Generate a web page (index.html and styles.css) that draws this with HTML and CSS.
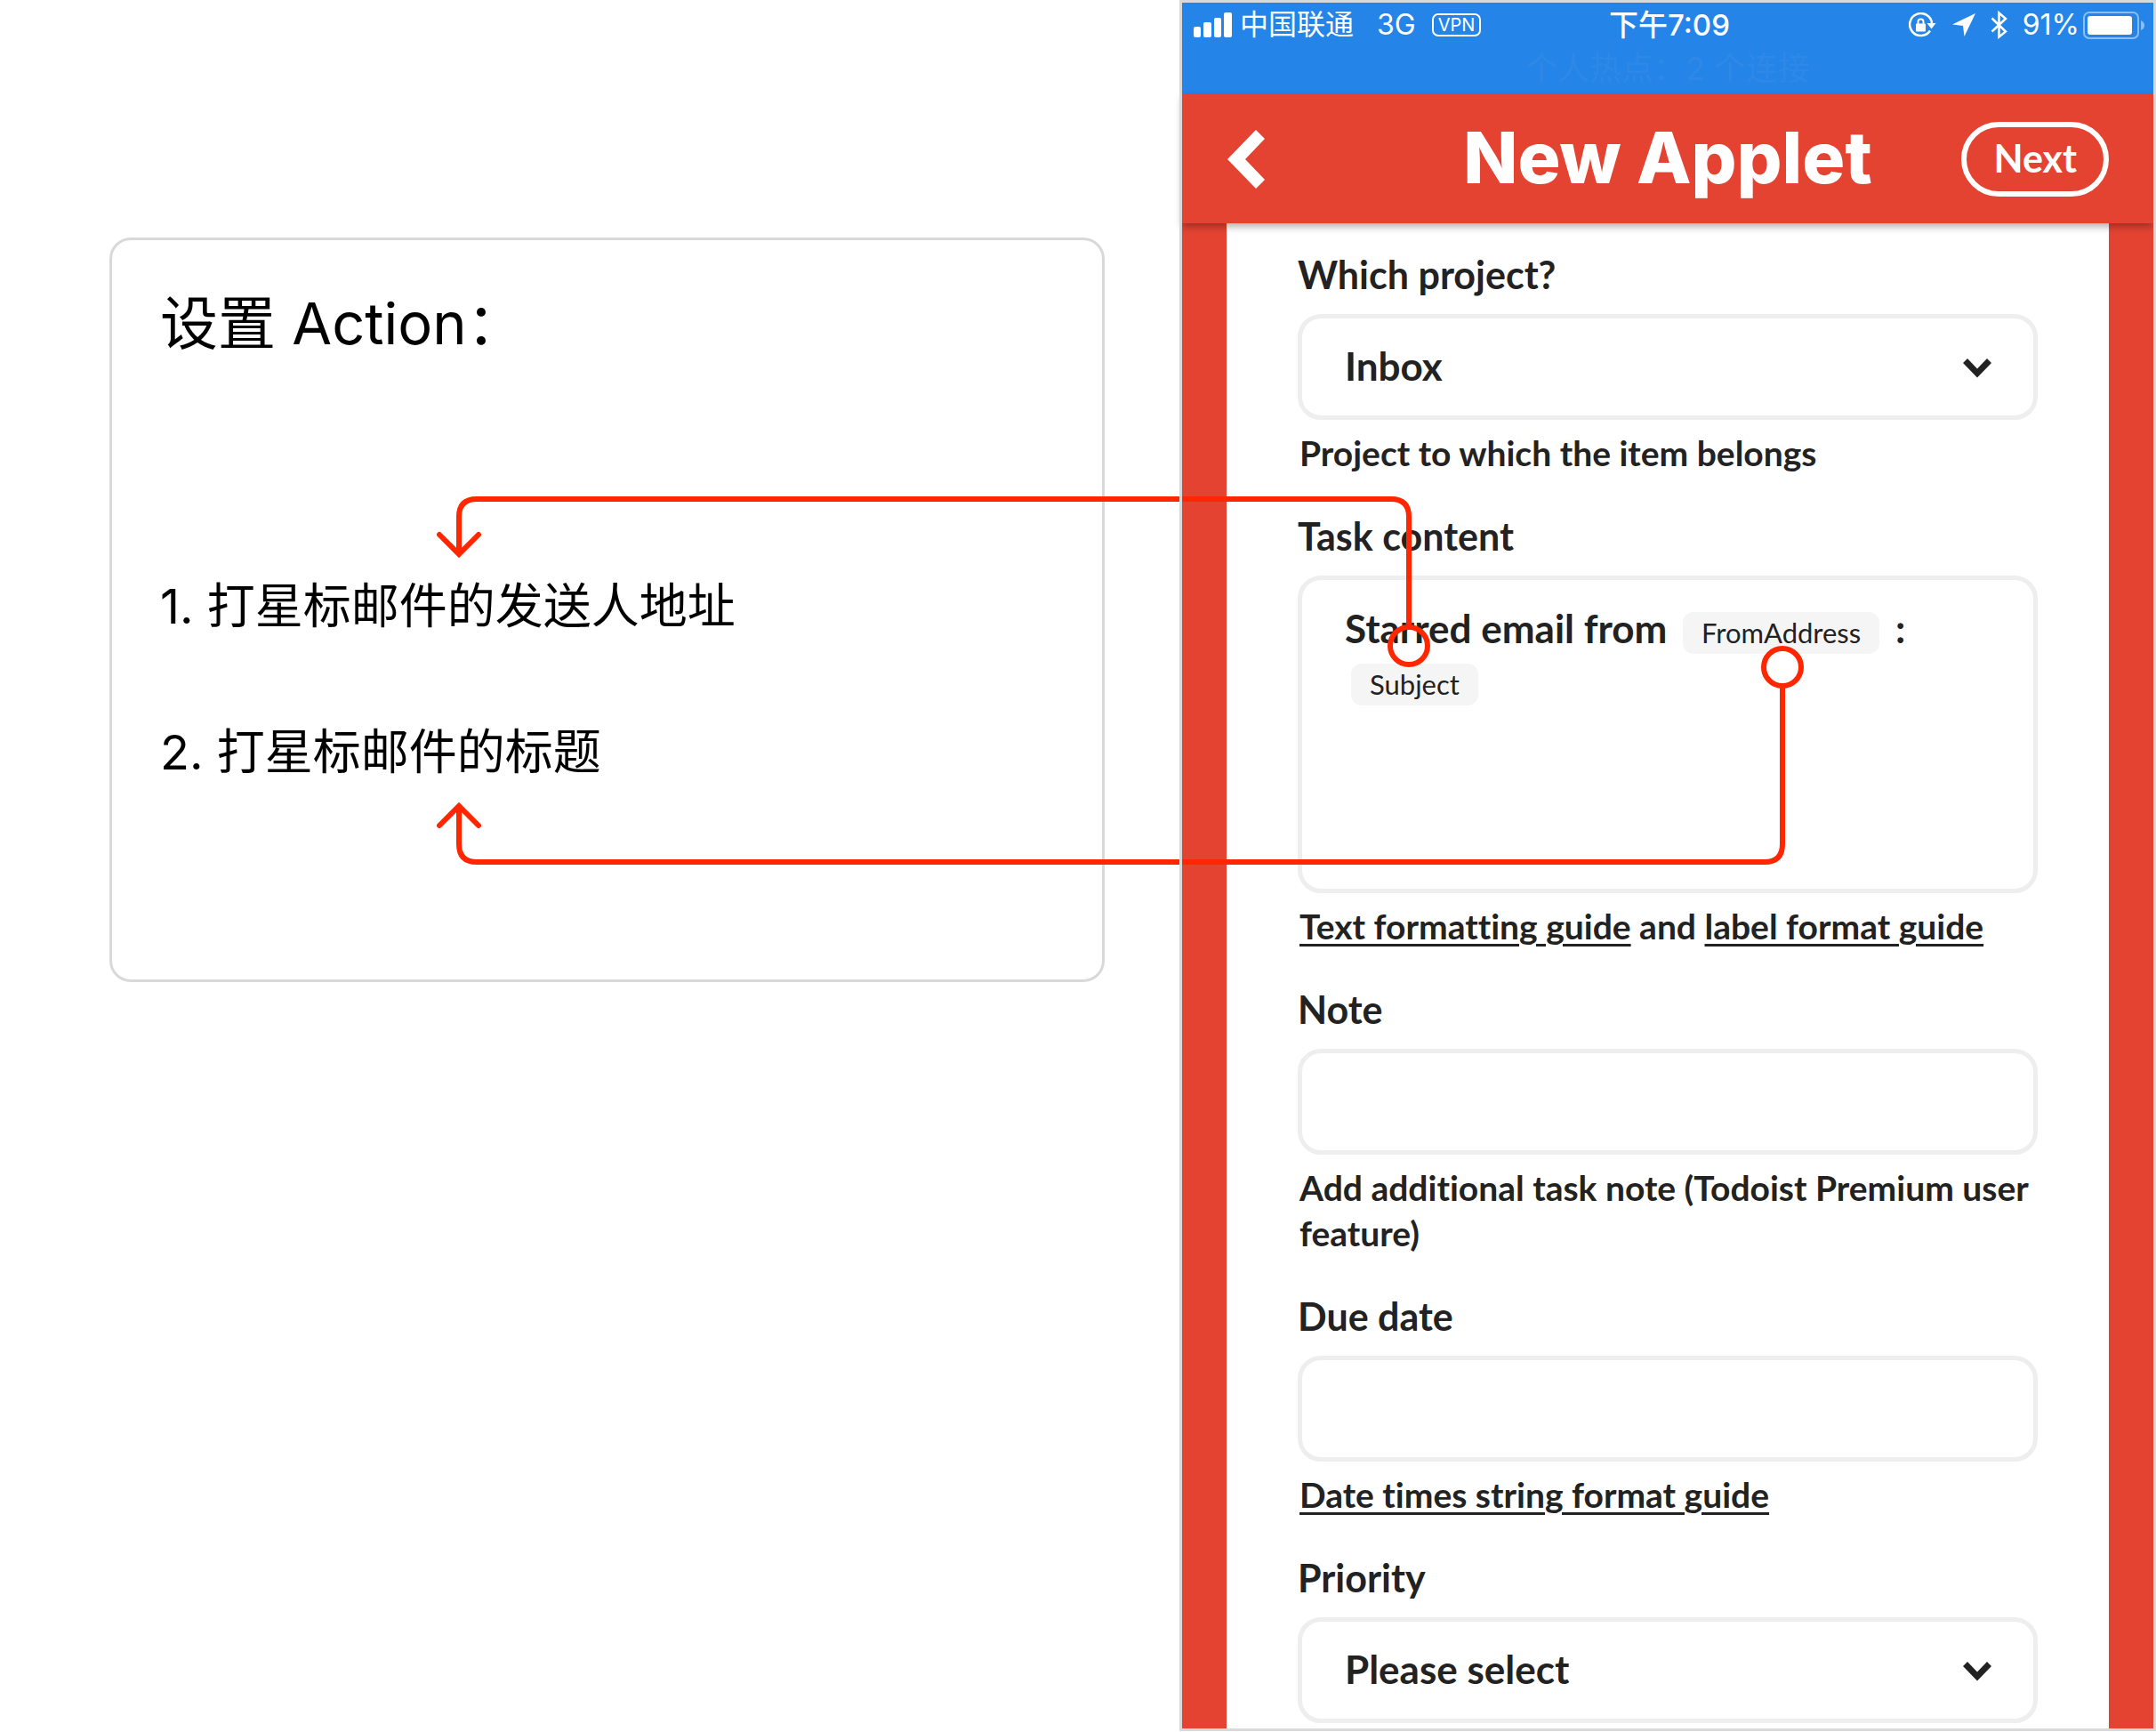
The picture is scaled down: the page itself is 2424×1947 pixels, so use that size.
FILE: index.html
```html
<!DOCTYPE html>
<html lang="zh-CN">

<head>
    <meta charset="UTF-8">
    <meta name="viewport" content="width=device-width, initial-scale=1.0">
    <title>New Applet</title>
    <link rel="stylesheet" href="styles.css">
</head>

<body>
    <main class="board">
        <div class="notes">
            <section class="card-notes">
                <h2>设置 Action：</h2>
                <p>1. 打星标邮件的发送人地址</p>
                <p>2. 打星标邮件的标题</p>
            </section>
        </div>

        <div class="phone">
            <div class="status-bar">
                <div class="status-row">
                    <div class="status-left">
                        <svg class="signal" viewBox="0 0 44 28" width="44" height="28" fill="#fff" aria-hidden="true">
                            <rect x="0" y="16" width="8" height="12" rx="2" />
                            <rect x="11" y="11" width="9" height="17" rx="2" />
                            <rect x="23" y="6" width="8" height="22" rx="2" />
                            <rect x="34" y="0" width="9" height="28" rx="2" />
                        </svg>
                        <span>中国联通</span>
                        <span class="network">3G</span>
                        <span class="vpn">VPN</span>
                    </div>
                    <span class="time">下午7:09</span>
                    <div class="status-right">
                        <svg viewBox="0 0 32 28" width="32" height="28" aria-hidden="true">
                            <path d="M24 20.500A12.500 12.500 0 1 1 26 12" fill="none" stroke="#fff" stroke-width="2.500" />
                            <path d="M20.500 12h10l-5 6.500z" fill="#fff" />
                            <rect x="8" y="12.500" width="11" height="9" rx="1" fill="#fff" />
                            <path d="M10.500 13.500v-3a3 3 0 0 1 6 0v3" fill="none" stroke="#fff" stroke-width="2" />
                        </svg>
                        <svg viewBox="0 0 28 28" width="28" height="28" fill="#fff" aria-hidden="true">
                            <path d="M27 1L1 13.500l12 1.500 1.500 12z" />
                        </svg>
                        <svg viewBox="0 0 20 32" width="20" height="32" fill="none" stroke="#fff" stroke-width="2.500" aria-hidden="true">
                            <path d="M1.500 8.500L17 23.500 9.500 29.500V2.500L17 9 1.500 23.500" />
                        </svg>
                        <span>91%</span>
                        <svg class="battery" viewBox="0 0 70 32" width="70" height="32" aria-hidden="true">
                            <rect x="1" y="2" width="61" height="29" rx="6" fill="none" stroke="#8abdf3" stroke-width="2" />
                            <rect x="5" y="6" width="50" height="21" rx="3" fill="#fff" />
                            <path d="M65 11q4 1.500 4 5.500t-4 5.500z" fill="#8abdf3" />
                        </svg>
                    </div>
                </div>
                <p class="hotspot">个人热点：2 个连接</p>
            </div>

            <header class="applet-header">
                <button type="button" class="btn-back" aria-label="Back">
                    <svg viewBox="0 0 44 66" width="44" height="66" fill="#fff" aria-hidden="true">
                        <path d="M1 33L33 0l10 10-22 23 22 23-10 10z" />
                    </svg>
                </button>
                <h1>New Applet</h1>
                <button type="button" class="btn-next">Next</button>
            </header>

            <form class="applet-form">
                <div class="field">
                    <label for="project">Which project?</label>
                    <div class="select-box">
                        <select id="project" name="project">
                            <option>Inbox</option>
                        </select>
                        <svg viewBox="0 0 32 22" width="32" height="22" fill="#222" aria-hidden="true">
                            <path d="M5 0l11 11.500L27 0l5 5-16 16.500L0 5z" />
                        </svg>
                    </div>
                    <p class="hint">Project to which the item belongs</p>
                </div>

                <div class="field">
                    <label id="contentLabel">Task content</label>
                    <div class="content-box" role="textbox" contenteditable="true" spellcheck="false" aria-multiline="true" aria-labelledby="contentLabel">Starred email from <span class="chip">FromAddress</span> : <br><span class="chip">Subject</span></div>
                    <p class="hint"><a href="#">Text formatting guide</a> and <a href="#">label format guide</a></p>
                </div>

                <div class="field">
                    <label for="note">Note</label>
                    <input type="text" id="note" name="note">
                    <p class="hint">Add additional task note (Todoist Premium user feature)</p>
                </div>

                <div class="field">
                    <label for="due">Due date</label>
                    <input type="text" id="due" name="due">
                    <p class="hint"><a href="#">Date times string format guide</a></p>
                </div>

                <div class="field">
                    <label for="priority">Priority</label>
                    <div class="select-box">
                        <select id="priority" name="priority">
                            <option>Please select</option>
                        </select>
                        <svg viewBox="0 0 32 22" width="32" height="22" fill="#222" aria-hidden="true">
                            <path d="M5 0l11 11.500L27 0l5 5-16 16.500L0 5z" />
                        </svg>
                    </div>
                </div>
            </form>
        </div>

        <!-- connectors between the notes and the form -->
        <svg class="connectors" viewBox="0 0 2424 1947" fill="none" stroke="#ff2600" stroke-width="6" aria-hidden="true">
            <path d="M1584 705V581q0-20-20-20H536q-20 0-20 20v41" />
            <path d="M494 601l22 22 22-22" stroke-linecap="round" />
            <circle cx="1584" cy="726" r="21" />
            <path d="M2004 771V949q0 20-20 20H536q-20 0-20-20v-41" />
            <path d="M494 928l22-22 22 22" stroke-linecap="round" />
            <circle cx="2004" cy="750" r="21" fill="#fff" />
        </svg>
    </main>
</body>

</html>
```
FILE: styles.css
```css
* {
    box-sizing: border-box;
    margin: 0;
}

body {
    background: #fff;
    color: #000;
    font-family: Inter, "Noto Sans CJK SC", sans-serif;
}

.board {
    position: relative;
    display: grid;
    grid-template-columns: 1326fr 1098fr;
    align-items: start;
}

/* left notes */
.notes {
    padding: 267px 84px 0 123px;
}

.card-notes {
    padding: 48px 54px 213px;
    border: 3px solid #d9d9d9;
    border-radius: 24px;
}

.card-notes h2 {
    margin-bottom: 230px;
    font-size: 65px;
    font-weight: 400;
    line-height: 92px;
}

.card-notes p {
    font-size: 54px;
    line-height: 84px;
}

.card-notes p + p {
    margin-top: 80px;
}

/* phone */
.phone {
    position: relative;
    padding: 3px;
    background: #e44332;
}

.phone::after {
    content: "";
    position: absolute;
    inset: 0;
    z-index: 2;
    border: 3px solid #d9d9d9;
    pointer-events: none;
}

.status-bar {
    height: 103px;
    background: #2484e8;
    color: #fff;
    font-size: 32px;
    line-height: 50px;
}

.status-row {
    display: grid;
    grid-template-columns: 1fr auto 1fr;
    align-items: center;
    padding: 0 9px 0 13px;
}

.status-left,
.status-right {
    display: flex;
    align-items: center;
    gap: 16px;
}

.status-left {
    gap: 8px;
}

.status-right {
    justify-content: flex-end;
}

.status-right .battery {
    margin-left: -12px;
}

.network {
    margin: 0 10px 0 18px;
}

.vpn {
    padding: 0 5px;
    border: 2px solid #fff;
    border-radius: 7px;
    font-size: 20px;
    line-height: 22px;
}

.time {
    font-size: 33px;
    font-weight: 500;
}

.hotspot {
    color: #2e88e7;
    font-size: 36px;
    line-height: 48px;
    text-align: center;
}

.applet-header {
    position: relative;
    display: grid;
    grid-template-columns: 1fr auto 1fr;
    align-items: center;
    height: 145px;
    padding: 0 50px;
    background: #e44332;
    box-shadow: 0 4px 8px rgba(0, 0, 0, 0.3);
    color: #fff;
}

.applet-header h1 {
    padding-bottom: 4px;
    font-size: 80px;
    font-weight: 800;
    line-height: 100px;
}

.btn-back {
    justify-self: start;
    display: flex;
    padding: 0;
    border: none;
    background: none;
    cursor: pointer;
}

.btn-next {
    justify-self: end;
    height: 84px;
    padding: 0 30px 2px;
    border: 6px solid #fff;
    border-radius: 42px;
    background: none;
    color: #fff;
    font-family: Lato, sans-serif;
    font-size: 43px;
    font-weight: 700;
    cursor: pointer;
}

.applet-form {
    margin: 0 50px;
    padding: 32px 80px 6px;
    background: #fff;
    color: #222;
    font-family: Lato, sans-serif;
    font-size: 43px;
    font-weight: 700;
    font-variant-ligatures: none;
}

.field + .field {
    margin-top: 42px;
}

.field label {
    display: block;
    margin-bottom: 18px;
    line-height: 52px;
}

.field input,
.field select,
.content-box {
    display: block;
    width: 100%;
    height: 119px;
    padding: 0 48px 4px;
    border: 5px solid #eee;
    border-radius: 26px;
    background: #fff;
    color: #222;
    font-family: inherit;
    font-size: 44px;
    font-weight: 700;
    outline: none;
}

.field select {
    appearance: none;
}

.select-box {
    position: relative;
}

.select-box svg {
    position: absolute;
    top: 50px;
    right: 52px;
    pointer-events: none;
}

.content-box {
    height: 357px;
    padding: 25px 48px;
    line-height: 58px;
}

.chip {
    display: inline-block;
    margin: 0 7px;
    padding: 0 21px;
    border-radius: 12px;
    background: #f5f5f5;
    font-size: 31px;
    font-weight: 400;
    line-height: 47px;
}

.hint {
    margin-top: 12px;
    padding-left: 2px;
    font-size: 39px;
    line-height: 51px;
}

.hint a {
    color: inherit;
    text-decoration-thickness: 3px;
    text-underline-offset: 5px;
}

.connectors {
    position: absolute;
    top: 0;
    left: 0;
    z-index: 1;
    width: 100%;
    pointer-events: none;
}
```
